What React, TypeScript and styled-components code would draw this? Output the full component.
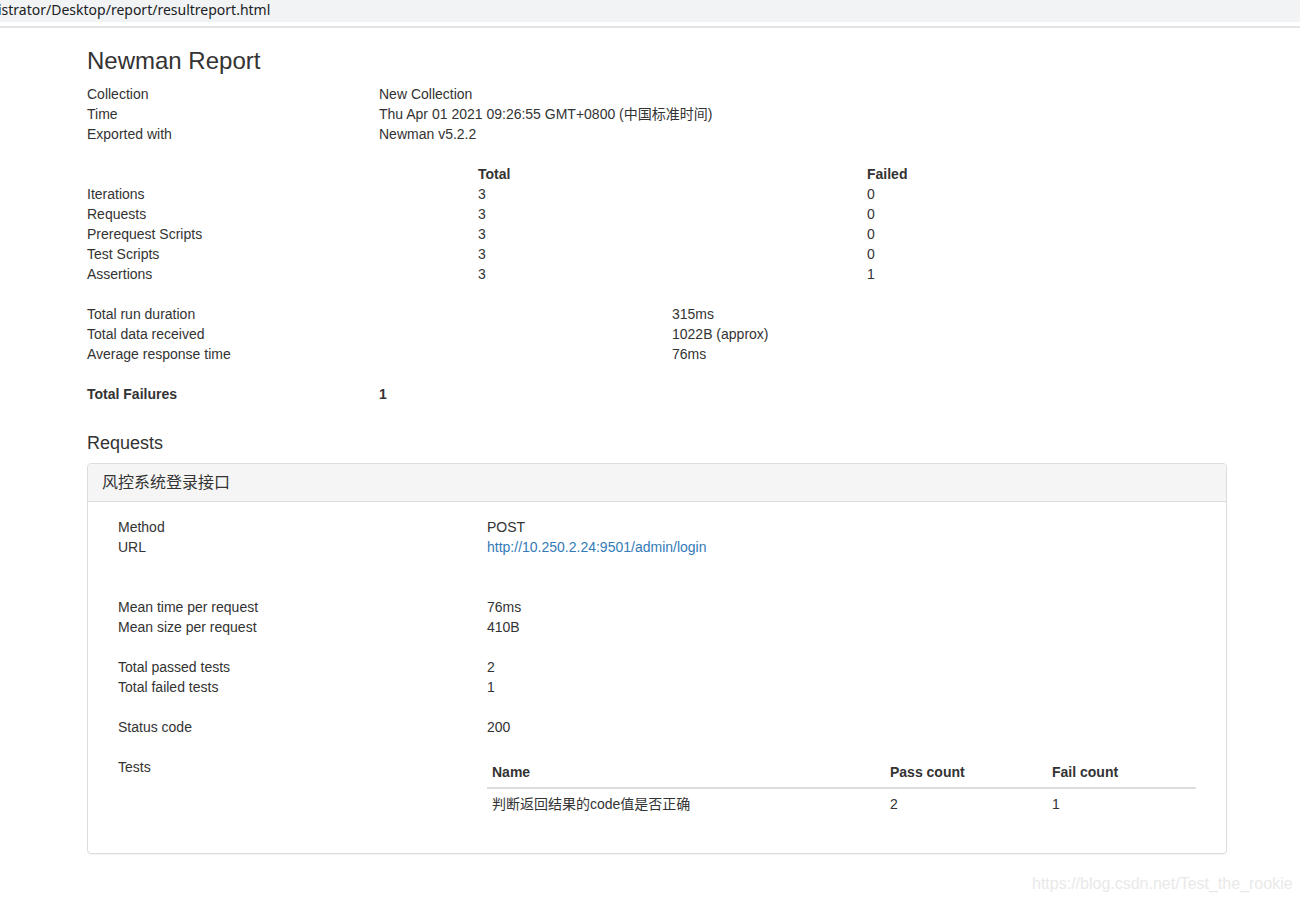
import styled, { createGlobalStyle } from 'styled-components';

const GlobalStyle = createGlobalStyle`
  html, body {
    margin: 0;
    padding: 0;
    background: #fff;
  }
  body {
    font-family: "Liberation Sans", "Noto Sans CJK SC", sans-serif;
    font-size: 14px;
    line-height: 20px;
    color: #333;
    width: 1300px;
    height: 902px;
    overflow: hidden;
  }
`;

const AddressBar = styled.div`
  height: 22px;
  background: #f1f3f4;
  color: #202124;
  font-family: "Noto Sans", "Liberation Sans", sans-serif;
  font-size: 14px;
  line-height: 19px;
  margin-left: -2px;
  white-space: nowrap;
`;

const BarDivider = styled.div`
  margin-top: 4px;
  height: 2px;
  background: #e1e3e5;
`;

const Container = styled.div`
  width: 1140px;
  margin-left: 87px;
`;

const Title = styled.h1`
  font-size: 24px;
  font-weight: 500;
  line-height: 26px;
  margin: 20px 0 10px;
`;

const Block = styled.div<{ $gap?: number }>`
  margin-bottom: ${(p) => p.$gap ?? 20}px;
`;

const Row = styled.div<{ $cols: string; $bold?: boolean }>`
  display: grid;
  grid-template-columns: ${(p) => p.$cols};
  font-weight: ${(p) => (p.$bold ? 'bold' : 'normal')};
`;

const SubTitle = styled.h4`
  font-size: 18px;
  font-weight: 500;
  line-height: 20px;
  margin: 29px 0 10px;
`;

const Panel = styled.div`
  border: 1px solid #ddd;
  border-radius: 4px;
  box-shadow: 0 1px 1px rgba(0, 0, 0, 0.05);
`;

const PanelHeading = styled.div`
  background: #f5f5f5;
  border-bottom: 1px solid #ddd;
  border-radius: 3px 3px 0 0;
  padding: 10px 14px;
  font-size: 16px;
  line-height: 17px;
`;

const PanelBody = styled.div`
  padding: 15px 30px;
`;

const Link = styled.a`
  color: #337ab7;
  text-decoration: none;
`;

const TestsTable = styled.table`
  width: 100%;
  border-collapse: collapse;
  margin-bottom: 19px;
  th, td {
    padding: 5px;
    text-align: left;
    line-height: 20px;
  }
  th {
    font-weight: bold;
    border-bottom: 2px solid #ddd;
  }
`;

const Watermark = styled.div`
  position: absolute;
  left: 1032px;
  top: 874px;
  font-size: 16px;
  color: #e9e9e9;
  font-family: "Liberation Sans", sans-serif;
`;

const summary = [
  ['Iterations', '3', '0'],
  ['Requests', '3', '0'],
  ['Prerequest Scripts', '3', '0'],
  ['Test Scripts', '3', '0'],
  ['Assertions', '3', '1'],
];

const TOP = '292px 1fr';
const STATS = '391px 389px 1fr';
const TIMES = '585px 1fr';
const INNER = '369px 1fr';

export default function App() {
  return (
    <>
      <GlobalStyle />
      <AddressBar>istrator/Desktop/report/resultreport.html</AddressBar>
      <BarDivider />
      <Container>
        <Title>Newman Report</Title>
        <Block>
          <Row $cols={TOP}><div>Collection</div><div>New Collection</div></Row>
          <Row $cols={TOP}><div>Time</div><div>Thu Apr 01 2021 09:26:55 GMT+0800 (中国标准时间)</div></Row>
          <Row $cols={TOP}><div>Exported with</div><div>Newman v5.2.2</div></Row>
        </Block>
        <Block>
          <Row $cols={STATS}><div /><b>Total</b><b>Failed</b></Row>
          {summary.map(([name, total, failed]) => (
            <Row $cols={STATS} key={name}>
              <div>{name}</div><div>{total}</div><div>{failed}</div>
            </Row>
          ))}
        </Block>
        <Block>
          <Row $cols={TIMES}><div>Total run duration</div><div>315ms</div></Row>
          <Row $cols={TIMES}><div>Total data received</div><div>1022B (approx)</div></Row>
          <Row $cols={TIMES}><div>Average response time</div><div>76ms</div></Row>
        </Block>
        <Row $cols={TOP} $bold><div>Total Failures</div><div>1</div></Row>
        <SubTitle>Requests</SubTitle>
        <Panel>
          <PanelHeading>风控系统登录接口</PanelHeading>
          <PanelBody>
            <Block $gap={40}>
              <Row $cols={INNER}><div>Method</div><div>POST</div></Row>
              <Row $cols={INNER}>
                <div>URL</div>
                <div><Link href="#">http://10.250.2.24:9501/admin/login</Link></div>
              </Row>
            </Block>
            <Block>
              <Row $cols={INNER}><div>Mean time per request</div><div>76ms</div></Row>
              <Row $cols={INNER}><div>Mean size per request</div><div>410B</div></Row>
            </Block>
            <Block>
              <Row $cols={INNER}><div>Total passed tests</div><div>2</div></Row>
              <Row $cols={INNER}><div>Total failed tests</div><div>1</div></Row>
            </Block>
            <Block>
              <Row $cols={INNER}><div>Status code</div><div>200</div></Row>
            </Block>
            <Row $cols={INNER}>
              <div>Tests</div>
              <TestsTable>
                <thead>
                  <tr>
                    <th style={{ width: 388 }}>Name</th>
                    <th style={{ width: 152 }}>Pass count</th>
                    <th>Fail count</th>
                  </tr>
                </thead>
                <tbody>
                  <tr>
                    <td>判断返回结果的code值是否正确</td>
                    <td>2</td>
                    <td>1</td>
                  </tr>
                </tbody>
              </TestsTable>
            </Row>
          </PanelBody>
        </Panel>
      </Container>
      <Watermark>https://blog.csdn.net/Test_the_rookie</Watermark>
    </>
  );
}
